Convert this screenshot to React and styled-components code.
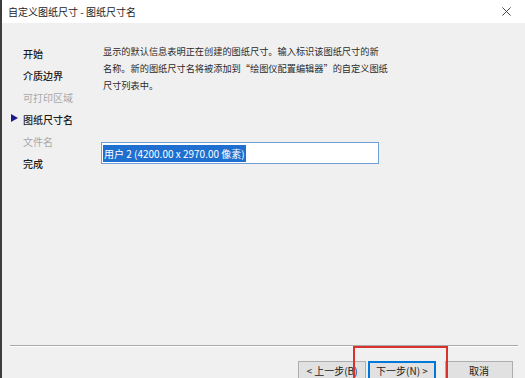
import React from 'react';
import styled, { createGlobalStyle } from 'styled-components';

const GlobalStyle = createGlobalStyle`
  html, body {
    margin: 0;
    padding: 0;
    overflow: hidden;
    background: #f0f0f0;
  }
  * {
    box-sizing: border-box;
  }
`;

const steps = [
  { label: '开始', state: 'done' },
  { label: '介质边界', state: 'done' },
  { label: '可打印区域', state: 'disabled' },
  { label: '图纸尺寸名', state: 'active' },
  { label: '文件名', state: 'disabled' },
  { label: '完成', state: 'done' },
];

const App = () => {
  return (
    <>
      <GlobalStyle />
      <Window>
        <TitleBar>
          <Title>自定义图纸尺寸 - 图纸尺寸名</Title>
          <CloseIcon viewBox="0 0 10 10">
            <path d="M0.5 0.5 L9.5 9.5 M9.5 0.5 L0.5 9.5" stroke="#333" strokeWidth="1" fill="none" />
          </CloseIcon>
        </TitleBar>
        <Main>
          <Sidebar>
            {steps.map((step) => (
              <NavItem key={step.label} $state={step.state}>
                <Marker>
                  {step.state === 'active' && (
                    <svg width="7" height="8" viewBox="0 0 7 8">
                      <polygon points="0,0 7,4 0,8" fill="#1c1c8a" />
                    </svg>
                  )}
                </Marker>
                {step.label}
              </NavItem>
            ))}
          </Sidebar>
          <Content>
            <Description>
              <Line>显示的默认信息表明正在创建的图纸尺寸。输入标识该图纸尺寸的新</Line>
              <Line>名称。新的图纸尺寸名将被添加到“绘图仪配置编辑器”的自定义图纸</Line>
              <Line>尺寸列表中。</Line>
            </Description>
            <NameInput>
              <Selected>用户 2 (4200.00 x 2970.00 像素)</Selected>
            </NameInput>
          </Content>
        </Main>
        <Footer>
          <Separator />
          <ButtonRow>
            <Button>&lt; 上一步(B)</Button>
            <Button $primary>下一步(N) &gt;</Button>
            <Button $spaced>取消</Button>
            <Highlight />
          </ButtonRow>
        </Footer>
      </Window>
    </>
  );
};

const Window = styled.div`
  width: 525px;
  height: 378px;
  display: flex;
  flex-direction: column;
  background: #f0f0f0;
  border-left: 2px solid #3c3c3c;
  font-family: "Noto Sans CJK SC", "Liberation Sans", sans-serif;
  color: #1e1e1e;
  overflow: hidden;
`;

const TitleBar = styled.div`
  height: 23px;
  flex-shrink: 0;
  background: #ffffff;
  display: flex;
  align-items: center;
  justify-content: space-between;
  padding: 0 14px 0 6px;
`;

const Title = styled.span`
  font-size: 10px;
  color: #222;
  line-height: 23px;
`;

const CloseIcon = styled.svg`
  width: 9px;
  height: 9px;
`;

const Main = styled.div`
  flex: 1;
  display: flex;
`;

const Sidebar = styled.div`
  width: 101px;
  flex-shrink: 0;
  padding-top: 19px;
  display: flex;
  flex-direction: column;
`;

const NavItem = styled.div`
  display: flex;
  align-items: center;
  height: 22px;
  padding-left: 9px;
  font-size: 10px;
  font-weight: ${(p) => (p.$state === 'disabled' ? 400 : 500)};
  color: ${(p) => (p.$state === 'disabled' ? '#a8a8a8' : '#1a1a1a')};
`;

const Marker = styled.span`
  width: 12px;
  display: flex;
  align-items: center;
  margin-top: -3px;
`;

const Content = styled.div`
  flex: 1;
  padding-top: 20px;
  display: flex;
  flex-direction: column;
`;

const Description = styled.div`
  font-size: 9.2px;
  line-height: 17px;
  color: #2a2a2a;
`;

const Line = styled.div`
  white-space: nowrap;
`;

const NameInput = styled.div`
  margin-top: 48px;
  margin-left: -2px;
  width: 278px;
  height: 22px;
  background: #ffffff;
  border: 1px solid #6f9fd6;
  display: flex;
  align-items: center;
  padding-left: 1px;
`;

const Selected = styled.span`
  background: #1e6fd0;
  color: #ffffff;
  font-size: 10px;
  line-height: 17px;
  padding: 0 1px;
`;

const Footer = styled.div`
  flex-shrink: 0;
  height: 33px;
  display: flex;
  flex-direction: column;
`;

const Separator = styled.div`
  margin: 0 7px 0 8px;
  height: 2px;
  border-top: 1px solid #a9a9a9;
  border-bottom: 1px solid #ffffff;
`;

const ButtonRow = styled.div`
  position: relative;
  display: flex;
  padding: 14px 0 0 296px;
  gap: 2px;
`;

const Button = styled.div`
  width: 68px;
  height: 23px;
  flex-shrink: 0;
  margin-left: ${(p) => (p.$spaced ? '7px' : '0')};
  display: flex;
  align-items: center;
  justify-content: center;
  font-size: 10px;
  color: #1a1a1a;
  background: #e1e1e1;
  border: 1px solid ${(p) => (p.$primary ? '#0078d7' : '#adadad')};
  box-shadow: ${(p) => (p.$primary ? 'inset 0 0 0 1px #0078d7' : 'none')};
  padding-bottom: 4px;
`;

const Highlight = styled.div`
  position: absolute;
  left: 351px;
  top: -1px;
  width: 95px;
  height: 40px;
  border: 2px solid #d8322e;
  pointer-events: none;
`;

export default App;
